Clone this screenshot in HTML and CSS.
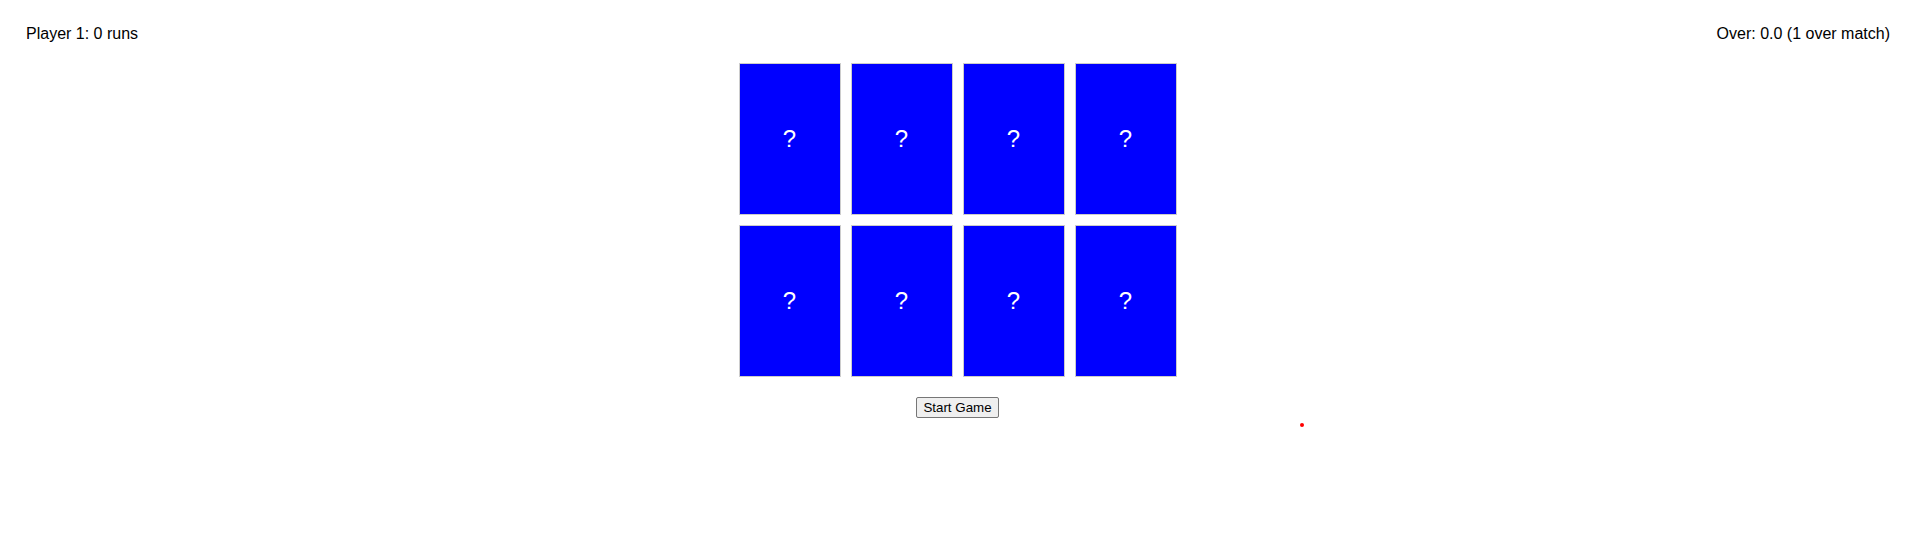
FILE: index.html
```html
<!DOCTYPE html>
<html>
<head>
<meta charset="utf-8">
<title>Cricket Memory</title>
<link rel="stylesheet" href="styles.css">
</head>
<body>
<div class="header">
  <div class="score">Player 1: 0 runs</div>
  <div class="overs">Over: 0.0 (1 over match)</div>
</div>
<div class="board">
  <div class="card">?</div>
  <div class="card">?</div>
  <div class="card">?</div>
  <div class="card">?</div>
  <div class="card">?</div>
  <div class="card">?</div>
  <div class="card">?</div>
  <div class="card">?</div>
</div>
<div class="controls">
  <button class="start-btn">Start Game</button>
</div>
<div class="ball"></div>
</body>
</html>
```
FILE: styles.css
```css
html, body {
  background: #ffffff;
}
body {
  margin: 8px;
  font-family: "Liberation Sans", Arial, sans-serif;
  font-size: 16px;
  color: #000;
}
.header {
  display: flex;
  justify-content: space-between;
  padding: 17px 17px 0 18px;
  line-height: 18px;
}
.board {
  display: flex;
  flex-wrap: wrap;
  width: 448px;
  margin: 15px auto 0;
}
.card {
  box-sizing: border-box;
  width: 102px;
  height: 152px;
  margin: 5px;
  background: #0000ff;
  border: 1px solid #cccccc;
  color: #ffffff;
  font-size: 24px;
  display: flex;
  align-items: center;
  justify-content: center;
}
.controls {
  display: flex;
  justify-content: center;
  margin-top: 15px;
}
.start-btn {
  font-family: "Liberation Sans", Arial, sans-serif;
  font-size: 13.333px;
  padding: 1px 6px;
  border: 1px solid #767676;
  border-radius: 2px;
  background: #efefef;
  color: #000;
  height: 21px;
}
.ball {
  position: absolute;
  left: 1300px;
  top: 423px;
  width: 4px;
  height: 4px;
  border-radius: 50%;
  background: #ff0000;
}
```
